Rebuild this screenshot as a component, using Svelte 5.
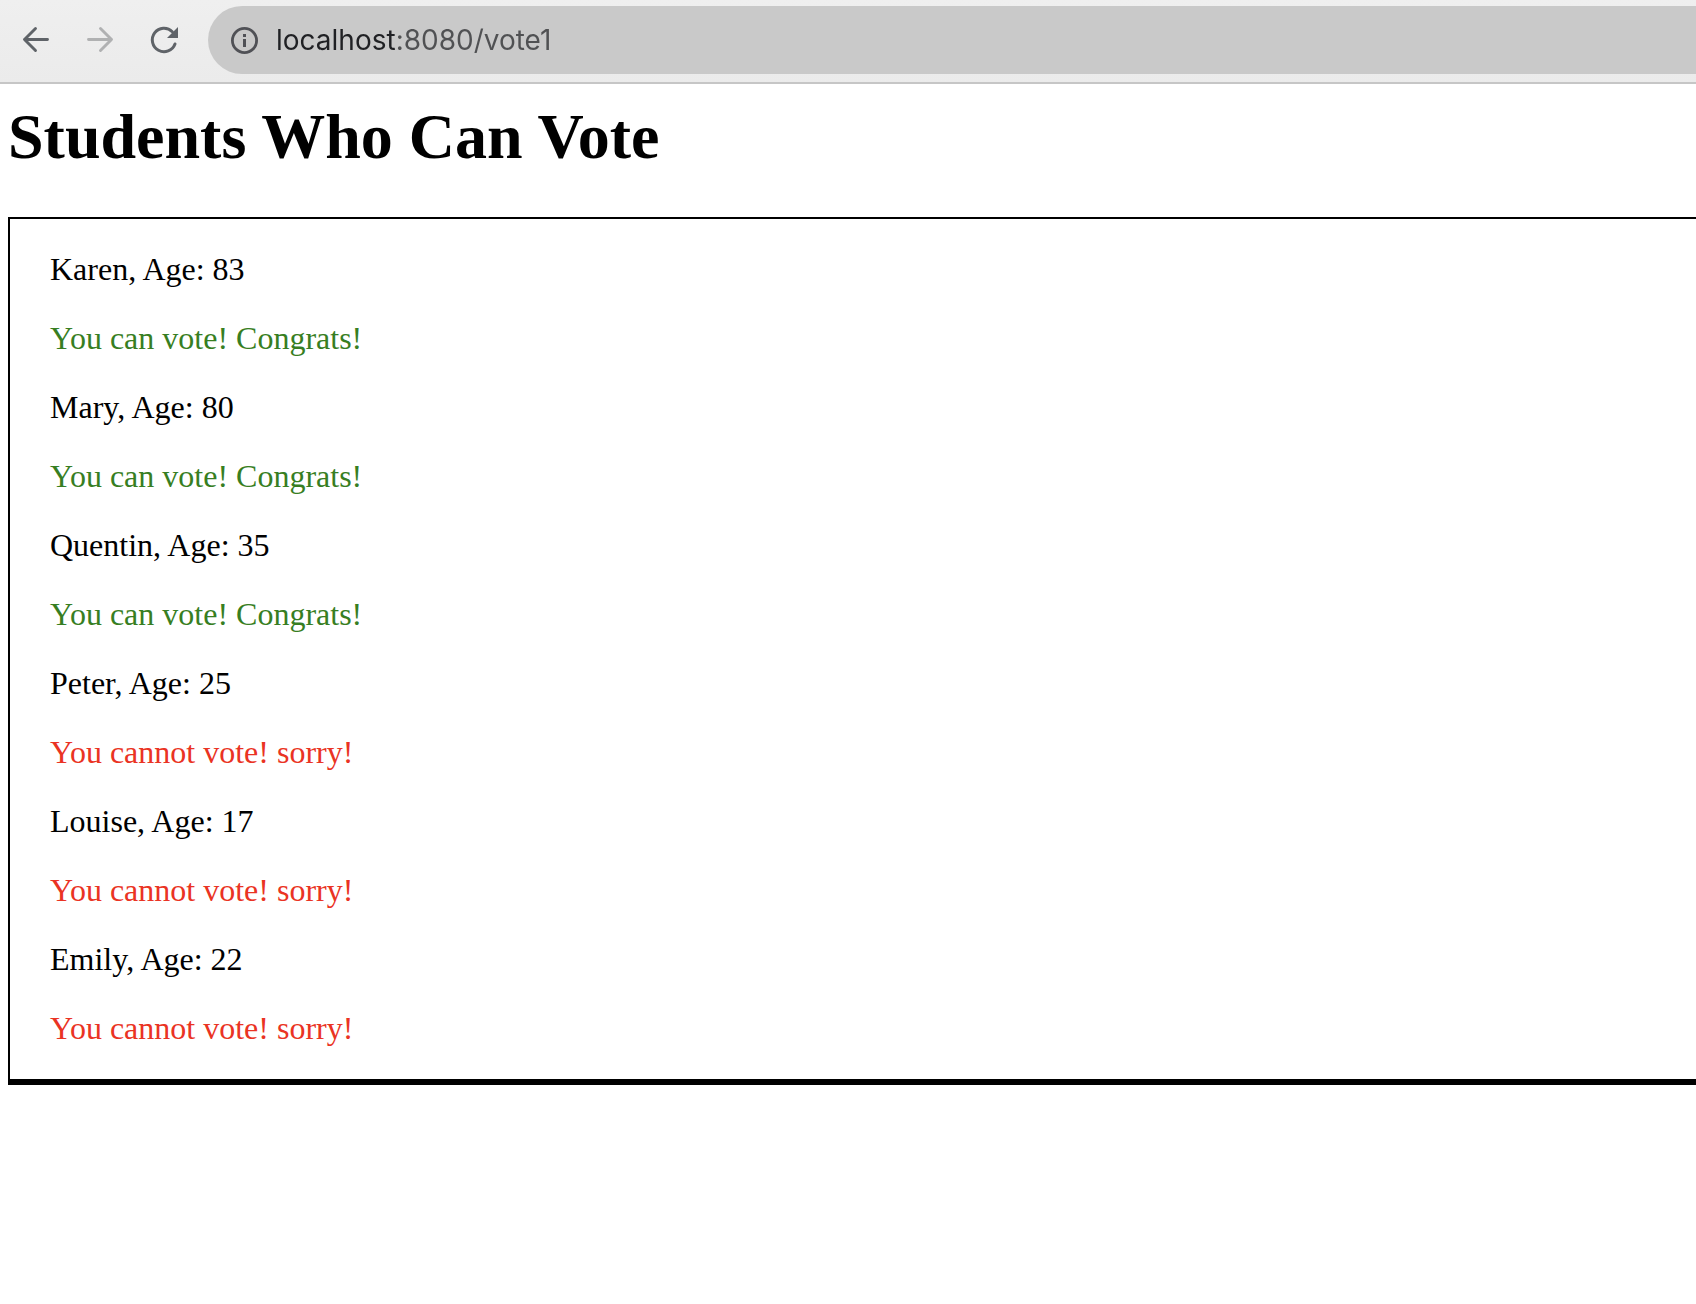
<script>
  let address = $state('localhost:8080/vote1');

  const students = [
    { name: 'Karen', age: 83, canVote: true },
    { name: 'Mary', age: 80, canVote: true },
    { name: 'Quentin', age: 35, canVote: true },
    { name: 'Peter', age: 25, canVote: false },
    { name: 'Louise', age: 17, canVote: false },
    { name: 'Emily', age: 22, canVote: false }
  ];
</script>

<header class="toolbar">
  <nav class="controls" aria-label="Browser navigation">
    <button type="button" aria-label="Back">
      <svg viewBox="0 0 32 32" fill="none" stroke="#5f6368" stroke-width="2.9" stroke-linecap="round" stroke-linejoin="round">
        <path d="M27.5 15.5H4.5M15.5 4.5L4.5 15.5L15.5 26.5" />
      </svg>
    </button>
    <button type="button" aria-label="Forward" disabled>
      <svg viewBox="0 0 32 32" fill="none" stroke="#b0b1b2" stroke-width="2.9" stroke-linecap="round" stroke-linejoin="round">
        <path d="M4.5 15.5H27.5M16.5 4.5L27.5 15.5L16.5 26.5" />
      </svg>
    </button>
    <button type="button" aria-label="Reload">
      <svg viewBox="0 0 32 32" fill="none">
        <path d="M27 20A11.7 11.7 0 1 1 24.3 7.7" stroke="#5f6368" stroke-width="3" stroke-linecap="round" />
        <path d="M30 3V14H19Z" fill="#5f6368" />
      </svg>
    </button>
  </nav>
  <div class="omnibox">
    <button type="button" aria-label="View site information">
      <svg viewBox="0 0 32 32" fill="none">
        <circle cx="16.5" cy="16.5" r="12.1" stroke="#505156" stroke-width="2.8" />
        <path d="M16.5 15V23M16.5 10V13" stroke="#505156" stroke-width="3" />
      </svg>
    </button>
    <input type="text" aria-label="Address" spellcheck="false" bind:value={address} />
  </div>
</header>

<main>
  <h1>Students Who Can Vote</h1>
  <section class="roster">
    {#each students as student (student.name)}
      <p>{student.name}, Age: {student.age}</p>
      {#if student.canVote}
        <p class="yes">You can vote! Congrats!</p>
      {:else}
        <p class="no">You cannot vote! sorry!</p>
      {/if}
    {/each}
  </section>
</main>

<style>
  :global(body) {
    margin: 0;
    background: #fff;
    overflow-x: hidden;
  }

  .toolbar {
    display: flex;
    align-items: center;
    gap: 28px;
    padding: 6px 0 8px 20px;
    background: linear-gradient(#efefef, #ebebeb);
    border-bottom: 2px solid #c6c6c6;
  }

  .controls {
    display: flex;
    gap: 32px;
  }

  button {
    display: flex;
    padding: 0;
    border: 0;
    background: none;
  }

  svg {
    width: 32px;
    height: 32px;
  }

  .omnibox {
    flex: 1;
    display: flex;
    align-items: center;
    gap: 16px;
    height: 68px;
    padding-left: 20px;
    border-radius: 34px 0 0 34px;
    background: #c9c9c9;
  }

  input {
    flex: 1;
    min-width: 0;
    padding: 0;
    border: 0;
    outline: 0;
    font: 28px/36px Inter, sans-serif;
    color: transparent;
    caret-color: #202124;
    background: linear-gradient(90deg, #202124 120px, #505153 120px);
    background-clip: text;
  }

  main {
    padding: 16px 0 0 8px;
    font-family: 'Liberation Serif', 'Times New Roman', serif;
    color: #000;
  }

  h1 {
    margin: 0 0 43px;
    font-size: 64px;
    line-height: 74px;
  }

  .roster {
    display: flex;
    flex-direction: column;
    gap: 32px;
    padding: 32px 40px;
    border: 2px solid #000;
    border-width: 2px 0 6px 2px;
    font-size: 32px;
    line-height: 37px;
  }

  p {
    margin: 0;
  }

  .yes {
    color: #377e22;
  }

  .no {
    color: #ea3323;
  }
</style>
